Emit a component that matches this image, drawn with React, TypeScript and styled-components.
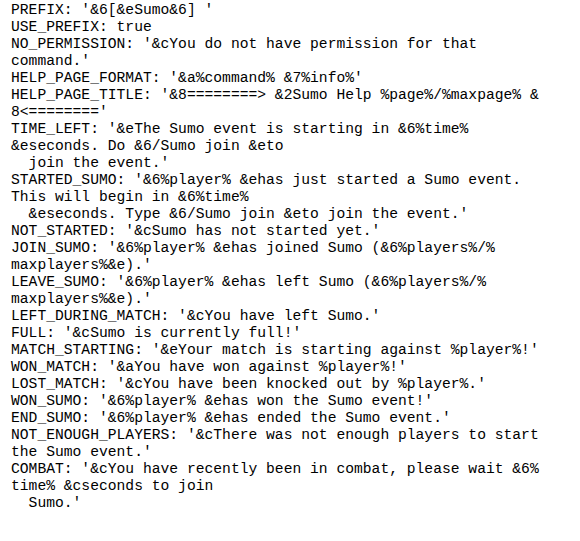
import React from "react";
import styled, { createGlobalStyle } from "styled-components";

const GlobalStyle = createGlobalStyle`
  html, body {
    margin: 0;
    padding: 0;
    background: #ffffff;
  }
`;

const Listing = styled.div`
  display: flex;
  flex-direction: column;
  padding: 2px 0 0 11px;
  font-family: "Courier New", "Liberation Mono", monospace;
  font-size: 14.667px;
  line-height: 17px;
  color: #000000;
`;

const Line = styled.div`
  white-space: pre;
  height: 17px;
`;

const lines: string[] = [
  "PREFIX: '&6[&eSumo&6] '",
  "USE_PREFIX: true",
  "NO_PERMISSION: '&cYou do not have permission for that",
  "command.'",
  "HELP_PAGE_FORMAT: '&a%command% &7%info%'",
  "HELP_PAGE_TITLE: '&8========> &2Sumo Help %page%/%maxpage% &",
  "8<========'",
  "TIME_LEFT: '&eThe Sumo event is starting in &6%time%",
  "&eseconds. Do &6/Sumo join &eto",
  "  join the event.'",
  "STARTED_SUMO: '&6%player% &ehas just started a Sumo event.",
  "This will begin in &6%time%",
  "  &eseconds. Type &6/Sumo join &eto join the event.'",
  "NOT_STARTED: '&cSumo has not started yet.'",
  "JOIN_SUMO: '&6%player% &ehas joined Sumo (&6%players%/%",
  "maxplayers%&e).'",
  "LEAVE_SUMO: '&6%player% &ehas left Sumo (&6%players%/%",
  "maxplayers%&e).'",
  "LEFT_DURING_MATCH: '&cYou have left Sumo.'",
  "FULL: '&cSumo is currently full!'",
  "MATCH_STARTING: '&eYour match is starting against %player%!'",
  "WON_MATCH: '&aYou have won against %player%!'",
  "LOST_MATCH: '&cYou have been knocked out by %player%.'",
  "WON_SUMO: '&6%player% &ehas won the Sumo event!'",
  "END_SUMO: '&6%player% &ehas ended the Sumo event.'",
  "NOT_ENOUGH_PLAYERS: '&cThere was not enough players to start",
  "the Sumo event.'",
  "COMBAT: '&cYou have recently been in combat, please wait &6%",
  "time% &cseconds to join",
  "  Sumo.'",
];

export default function App() {
  return (
    <>
      <GlobalStyle />
      <Listing>
        {lines.map((text, i) => (
          <Line key={i}>{text}</Line>
        ))}
      </Listing>
    </>
  );
}
